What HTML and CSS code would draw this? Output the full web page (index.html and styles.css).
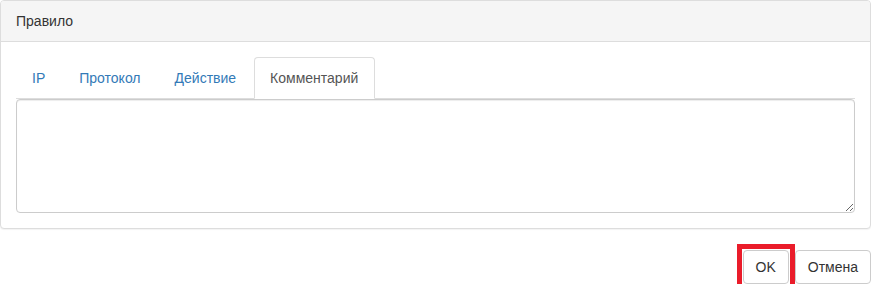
FILE: index.html
```html
<!DOCTYPE html>
<html lang="ru">
<head>
    <meta charset="UTF-8">
    <meta name="viewport" content="width=device-width, initial-scale=1.0">
    <title>Правило</title>
    <link rel="stylesheet" href="styles.css">
</head>
<body>
    <div class="panel">
        <div class="panel-heading">Правило</div>
        <div class="panel-body">
            <ul class="nav-tabs">
                <li><a href="#">IP</a></li>
                <li><a href="#">Протокол</a></li>
                <li><a href="#">Действие</a></li>
                <li class="active"><a href="#">Комментарий</a></li>
            </ul>
            <textarea class="form-control" rows="5"></textarea>
        </div>
    </div>

    <div class="footer">
        <button class="btn btn-highlight">OK</button>
        <button class="btn">Отмена</button>
    </div>
</body>
</html>
```

FILE: styles.css
```css
* {
    box-sizing: border-box;
}

body {
    margin: 0;
    font-family: 'Liberation Sans', Arial, sans-serif;
    font-size: 14px;
    line-height: 20px;
    color: #333;
    background-color: white;
}

.panel {
    width: 871px;
    border: 1px solid #ddd;
    border-radius: 4px;
    box-shadow: 0 1px 1px rgba(0, 0, 0, 0.05);
    background-color: white;
}

.panel-heading {
    padding: 10px 15px;
    background-color: #f5f5f5;
    border-bottom: 1px solid #ddd;
    border-radius: 3px 3px 0 0;
}

.panel-body {
    padding: 15px;
}

.nav-tabs {
    display: flex;
    list-style: none;
    margin: 0;
    padding: 0;
    border-bottom: 1px solid #ddd;
}

.nav-tabs li {
    margin-bottom: -1px;
}

.nav-tabs a {
    display: block;
    margin-right: 2px;
    padding: 10px 15px;
    border: 1px solid transparent;
    border-radius: 4px 4px 0 0;
    color: #337ab7;
    text-decoration: none;
}

.nav-tabs .active a {
    padding: 10px 16px 10px 15px;
    color: #555;
    background-color: white;
    border-color: #ddd #ddd transparent;
}

.form-control {
    display: block;
    width: 100%;
    padding: 6px 12px;
    border: 1px solid #ccc;
    border-radius: 4px;
    box-shadow: inset 0 1px 1px rgba(0, 0, 0, 0.075);
    font-family: inherit;
    font-size: 14px;
    line-height: 20px;
    color: #555;
    resize: vertical;
}

.footer {
    display: flex;
    justify-content: flex-end;
    gap: 6px;
    margin-top: 21px;
}

.btn {
    position: relative;
    padding: 6px 12px;
    border: 1px solid #ccc;
    border-radius: 4px;
    background-color: white;
    font-family: inherit;
    font-size: 14px;
    line-height: 20px;
    color: #333;
}

.btn-highlight::after {
    content: '';
    position: absolute;
    top: -7px;
    right: -7px;
    bottom: -7px;
    left: -7px;
    border: 5px solid #ea1c2a;
}
```
